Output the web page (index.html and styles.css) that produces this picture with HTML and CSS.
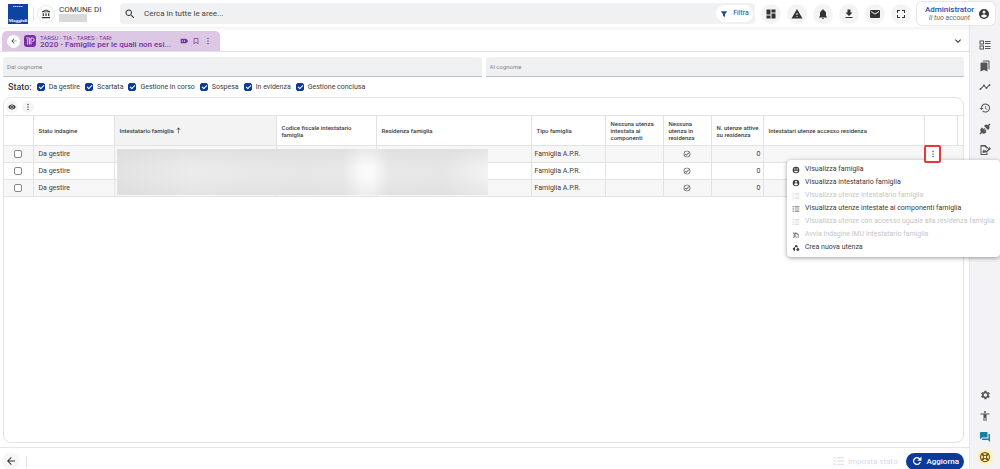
FILE: index.html
```html
<!DOCTYPE html>
<html lang="it">
<head>
<meta charset="utf-8">
<meta name="viewport" content="width=device-width, initial-scale=1">
<title>Famiglie</title>
<link rel="stylesheet" href="styles.css">
</head>
<body>
<svg class="sprite" aria-hidden="true">
  <symbol id="bank" viewBox="0 0 24 24"><path d="M4 10v7h3v-7H4zm6.500 0v7h3v-7h-3zM2 22h20v-3H2v3zm15-12v7h3v-7h-3zM12 1 2 6v2h20V6L12 1zm0 2.300L17.400 6H6.600z"/></symbol>
  <symbol id="search" viewBox="0 0 24 24"><path d="M15.500 14h-.8l-.3-.3A6.500 6.500 0 1 0 13.700 14.400l.3.3v.8l5 5 1.500-1.500-5-5zm-6 0a4.500 4.500 0 1 1 0-9 4.500 4.500 0 0 1 0 9z"/></symbol>
  <symbol id="filter" viewBox="0 0 24 24"><path d="M4 4h16a1 1 0 0 1 .8 1.600L15 13v8l-6-3v-5L3.200 5.600A1 1 0 0 1 4 4z"/></symbol>
  <symbol id="dash" viewBox="0 0 24 24"><path d="M3 13h8V3H3v10zm0 8h8v-6H3v6zm10 0h8V11h-8v10zm0-18v6h8V3h-8z"/></symbol>
  <symbol id="warn" viewBox="0 0 24 24"><path d="M1 21h22L12 2 1 21zm12-3h-2v-2h2v2zm0-4h-2v-4h2v4z"/></symbol>
  <symbol id="bell" viewBox="0 0 24 24"><path d="M12 22a2 2 0 0 0 2-2h-4a2 2 0 0 0 2 2zm6-6v-5c0-3.100-1.600-5.600-4.500-6.300V4a1.500 1.500 0 0 0-3 0v.7C7.600 5.400 6 7.900 6 11v5l-2 2v1h16v-1l-2-2z"/></symbol>
  <symbol id="download" viewBox="0 0 24 24"><path d="M19 9h-4V3H9v6H5l7 7 7-7zM5 18v2h14v-2H5z"/></symbol>
  <symbol id="mail" viewBox="0 0 24 24"><path d="M20 4H4a2 2 0 0 0-2 2v12a2 2 0 0 0 2 2h16a2 2 0 0 0 2-2V6a2 2 0 0 0-2-2zm0 4-8 5-8-5V6l8 5 8-5v2z"/></symbol>
  <symbol id="full" viewBox="0 0 24 24"><path d="M6 14H4v6h6v-2H6v-4zM4 10h2V6h4V4H4v6zm14 8h-4v2h6v-6h-2v4zM14 4v2h4v4h2V4h-6z"/></symbol>
  <symbol id="user" viewBox="0 0 24 24"><path d="M12 2a10 10 0 1 0 0 20 10 10 0 0 0 0-20zm0 3a3 3 0 1 1 0 6 3 3 0 0 1 0-6zm0 14.200a7.200 7.200 0 0 1-6-3.200c0-2 4-3.100 6-3.100s6 1.100 6 3.100a7.200 7.200 0 0 1-6 3.200z"/></symbol>
  <symbol id="family" viewBox="0 0 24 24"><path fill-rule="evenodd" d="M12 2a10 10 0 1 0 0 20 10 10 0 0 0 0-20zM8.500 7a2.300 2.300 0 1 1 0 4.600 2.300 2.300 0 0 1 0-4.600zm7 0a2.300 2.300 0 1 1 0 4.600 2.300 2.300 0 0 1 0-4.600zM6 15c2-1.500 4-1.500 6 0 2-1.500 4-1.500 6 0-1 2.500-3 4-6 4s-5-1.500-6-4z"/></symbol>
  <symbol id="back" viewBox="0 0 24 24"><path d="M20 11H7.800l5.600-5.600L12 4l-8 8 8 8 1.400-1.400L7.800 13H20v-2z"/></symbol>
  <symbol id="up" viewBox="0 0 24 24"><path d="m5 9 1.400 1.400L11 5.800V22h2V5.800l4.600 4.600L19 9l-7-7-7 7z"/></symbol>
  <symbol id="dots" viewBox="0 0 24 24"><circle cx="12" cy="4.500" r="2"/><circle cx="12" cy="12" r="2"/><circle cx="12" cy="19.500" r="2"/></symbol>
  <symbol id="tag" viewBox="0 0 24 24"><path fill-rule="evenodd" d="M2 5h15l6 4v6l-6 4H2V5zm4 5v4h3v-4H6zm6 0v4h3v-4h-3z"/></symbol>
  <symbol id="mark" viewBox="0 0 24 24"><path d="M17 3H7a2 2 0 0 0-2 2v16l7-3 7 3V5a2 2 0 0 0-2-2zm0 15-5-2.200L7 18V5h10v13z"/></symbol>
  <symbol id="down" viewBox="0 0 24 24"><path d="M7.400 8.600 12 13.200l4.600-4.600L18 10l-6 6-6-6z"/></symbol>
  <symbol id="eye" viewBox="0 0 24 24"><path fill-rule="evenodd" d="M12 4.500C7 4.500 2.700 7.600 1 12c1.700 4.400 6 7.500 11 7.500s9.300-3.100 11-7.500c-1.700-4.400-6-7.500-11-7.500zM12 17a5 5 0 1 1 0-10 5 5 0 0 1 0 10zm0-8a3 3 0 1 0 0 6 3 3 0 0 0 0-6z"/></symbol>
  <symbol id="ok" viewBox="0 0 24 24"><path d="M16.600 7.600 10 14.200l-2.600-2.600L6 13l4 4 8-8-1.400-1.400zM12 2a10 10 0 1 0 0 20 10 10 0 0 0 0-20zm0 18a8 8 0 1 1 0-16 8 8 0 0 1 0 16z"/></symbol>
  <symbol id="list" viewBox="0 0 24 24"><path d="M2 4h3v3H2zm0 6.500h3v3H2zM2 17h3v3H2zM8 4.500h14v2H8zM8 11h14v2H8zm0 6.500h14v2H8z"/></symbol>
  <symbol id="survey" viewBox="0 0 24 24"><path d="M4 4h3v3l5-3 8 5v12h-3v-9l-5-3-2 2 5 10h-3l-3-6-2 6H3l3-11-3-2z"/></symbol>
  <symbol id="cycle" viewBox="0 0 24 24"><path d="M12 5 8 11M16 11l3 6h-6M9 18H5l3-6" fill="none" stroke="currentColor" stroke-width="3"/><path d="M8 4h7l3 6-6-1zM21 12l1 6-5 4-3-5zM2 13l6-3 2 6-3 5z"/></symbol>
  <symbol id="checks" viewBox="0 0 24 24"><path fill-rule="evenodd" d="M1 3h9v8H1zm2 2v4h5V5zM1 13h9v8H1zm2 2v4h5v-4zM12 4h11v2H12zm0 4h11v2H12zm0 6h11v2H12zm0 4h11v2H12z"/></symbol>
  <symbol id="marks" viewBox="0 0 24 24"><path d="m19 18 2 1V3a2 2 0 0 0-2-2H9a2 2 0 0 0-2 2h10a2 2 0 0 1 2 2v13zM15 5H5a2 2 0 0 0-2 2v16l7-3 7 3V7a2 2 0 0 0-2-2z"/></symbol>
  <symbol id="trend" viewBox="0 0 24 24"><path d="M23 8a2 2 0 0 1-2.500 1.900L17 13.500a2 2 0 1 1-3.900 0L10.500 11a2 2 0 0 1-1 0L5 15.500A2 2 0 1 1 3.500 14L8 9.500a2 2 0 1 1 3.900 0l2.600 2.600h1L19 8.500A2 2 0 1 1 23 8z"/></symbol>
  <symbol id="history" viewBox="0 0 24 24"><path d="M13 3a9 9 0 0 0-9 9H1l4 4 4-4H6a7 7 0 1 1 2 5l-1.400 1.400A9 9 0 1 0 13 3zm-1 5v5l4.300 2.500.7-1.200-3.500-2V8z"/></symbol>
  <symbol id="plug" viewBox="0 0 24 24"><path d="m21 1 2 2-3 3c2 3 1 5-1 7l-1 1-8-8 1-1c2-2 4-3 7-1zM6 9l3 3 2-2 1.500 1.500-2 2 1 1 2-2L15 14l-2 2 2 2-2 2c-2 2-5 2-7 0l-3 3-2-2 3-3c-2-2-2-5 0-7z"/></symbol>
  <symbol id="sign" viewBox="0 0 24 24"><path d="M3 2h10l5 5v2h-3l-4-4H5v15h10v-3h2v5H3V2zm4 13c3-6 4-5 4-1l2-2 1 2 6-5 2 2-7 6h-3l-5 1z"/><path d="m18 9 3-3 3 3-3 3z"/></symbol>
  <symbol id="gear" viewBox="0 0 24 24"><path d="M19.400 13v-2l2.100-1.600-2-3.500-2.500 1-1.700-1L14.900 3.300h-4.100l-.4 2.600-1.700 1-2.500-1-2 3.500L6.300 11v2l-2.100 1.600 2 3.500 2.500-1 1.700 1 .4 2.600h4.100l.4-2.600 1.700-1 2.500 1 2-3.500zM12.900 15.500a3.500 3.500 0 1 1 0-7 3.500 3.500 0 0 1 0 7z"/></symbol>
  <symbol id="access" viewBox="0 0 24 24"><path d="M12 2a2 2 0 1 1 0 4 2 2 0 0 1 0-4zm9 7h-6v13h-2v-6h-2v6H9V9H3V7h18v2z"/></symbol>
  <symbol id="chat" viewBox="0 0 24 24"><path d="M21 6h-2v9H6v2a1 1 0 0 0 1 1h11l4 4V7a1 1 0 0 0-1-1zm-4 6V3a1 1 0 0 0-1-1H3a1 1 0 0 0-1 1v14l4-4h10a1 1 0 0 0 1-1z"/></symbol>
  <symbol id="buoy" viewBox="0 0 24 24"><circle cx="12" cy="12" r="9" fill="none" stroke="currentColor" stroke-width="2.500"/><circle cx="12" cy="12" r="3.500" fill="none" stroke="currentColor" stroke-width="2"/><path d="m5 5 5 5m4 4 5 5m0-14-5 5m-4 4-5 5" stroke="currentColor" stroke-width="4"/></symbol>
  <symbol id="reload" viewBox="0 0 24 24"><path d="M17.600 6.400A8 8 0 1 0 19.700 14h-2.800a5.300 5.300 0 1 1-1.200-5.700L12.500 11.500H21V3z"/></symbol>
</svg>

<div class="app">
  <div class="main">
    <header class="topbar">
      <svg class="logo" viewBox="0 0 20 20" role="img" aria-label="Maggioli"><rect width="20" height="20" fill="#0d43a3"/><path d="M5 2.500h10" stroke="#c5d3ec" stroke-dasharray="1.500 .4"/><text x="10" y="18" text-anchor="middle" class="logo-text">Maggioli</text></svg>
      <span class="rule"></span>
      <span class="round bordered"><svg class="icon"><use href="#bank"/></svg></span>
      <div class="entity"><span>COMUNE DI</span><span class="redacted"></span></div>
      <div class="search">
        <svg class="icon"><use href="#search"/></svg>
        <input type="text" aria-label="Cerca" placeholder="Cerca in tutte le aree...">
        <button class="filter"><svg class="icon small"><use href="#filter"/></svg>Filtra</button>
      </div>
      <nav class="tools">
        <button class="round" aria-label="Cruscotto"><svg class="icon"><use href="#dash"/></svg></button>
        <button class="round" aria-label="Avvisi"><svg class="icon"><use href="#warn"/></svg></button>
        <button class="round" aria-label="Notifiche"><svg class="icon"><use href="#bell"/></svg></button>
        <button class="round" aria-label="Scarica"><svg class="icon"><use href="#download"/></svg></button>
        <button class="round" aria-label="Posta"><svg class="icon"><use href="#mail"/></svg></button>
        <button class="round" aria-label="Schermo intero"><svg class="icon"><use href="#full"/></svg></button>
      </nav>
      <button class="account"><span class="who"><b>Administrator</b><i>Il tuo account</i></span><svg class="icon"><use href="#user"/></svg></button>
    </header>

    <div class="tabs">
      <div class="tab">
        <button class="tab-back" aria-label="Indietro"><svg class="icon small"><use href="#back"/></svg></button>
        <svg class="tab-logo" viewBox="0 0 12 12"><rect width="12" height="12" rx="3" fill="#7a2da4"/><path d="M2 3h3.500v6.500M3.700 4v5.500M7 9.500V3h1.500a1.700 1.700 0 0 1 0 3.500H8" fill="none" stroke="#e6d3ee"/></svg>
        <div class="tab-text"><span class="tab-area">TARSU - TIA - TARES - TARI</span><span class="tab-title">2020 - Famiglie per le quali non esi...</span></div>
        <button class="plain" aria-label="Etichetta"><svg class="icon small"><use href="#tag"/></svg></button>
        <button class="plain" aria-label="Segnalibro"><svg class="icon small"><use href="#mark"/></svg></button>
        <button class="plain" aria-label="Altro"><svg class="icon small"><use href="#dots"/></svg></button>
      </div>
      <button class="plain expand" aria-label="Espandi"><svg class="icon"><use href="#down"/></svg></button>
    </div>

    <main class="page">
      <div class="fields">
        <input type="text" aria-label="Dal cognome" placeholder="Dal cognome">
        <input type="text" aria-label="Al cognome" placeholder="Al cognome">
      </div>
      <div class="states">
        <span class="states-title">Stato:</span>
        <label><input type="checkbox" checked>Da gestire</label>
        <label><input type="checkbox" checked>Scartata</label>
        <label><input type="checkbox" checked>Gestione in corso</label>
        <label><input type="checkbox" checked>Sospesa</label>
        <label><input type="checkbox" checked>In evidenza</label>
        <label><input type="checkbox" checked>Gestione conclusa</label>
      </div>
      <section class="panel">
        <div class="panel-tools">
          <button class="round tiny" aria-label="Mostra"><svg class="icon small"><use href="#eye"/></svg></button>
          <button class="round tiny" aria-label="Altro"><svg class="icon small"><use href="#dots"/></svg></button>
        </div>
        <div class="grid">
          <table>
            <colgroup><col class="c-check"><col class="c-state"><col class="c-name"><col class="c-code"><col class="c-home"><col class="c-type"><col class="c-none"><col class="c-res"><col class="c-num"><col><col class="c-act"><col class="c-end"></colgroup>
            <thead><tr><th></th><th>Stato indagine</th><th class="sorted">Intestatario famiglia <svg class="sort"><use href="#up"/></svg></th><th>Codice fiscale intestatario famiglia</th><th>Residenza famiglia</th><th>Tipo famiglia</th><th>Nessuna utenza intestata ai componenti</th><th>Nessuna utenza in residenza</th><th>N. utenze attive su residenza</th><th>Intestatari utenze accesso residenza</th><th></th><th></th></tr></thead>
            <tbody>
              <tr><td class="mid"><input type="checkbox" aria-label="Riga 1"></td><td>Da gestire</td><td></td><td></td><td></td><td class="type">Famiglia A.P.R.</td><td></td><td class="mid"><svg class="icon small"><use href="#ok"/></svg></td><td class="num">0</td><td></td>
                <td class="act"><div class="anchor"><button class="more" aria-label="Azioni"><svg class="icon small"><use href="#dots"/></svg></button>
                  <div class="menu" role="menu">
                    <button role="menuitem"><svg class="icon small"><use href="#family"/></svg>Visualizza famiglia</button>
                    <button role="menuitem"><svg class="icon small"><use href="#user"/></svg>Visualizza intestatario famiglia</button>
                    <button role="menuitem" disabled><svg class="icon small"><use href="#list"/></svg>Visualizza utenze intestatario famiglia</button>
                    <button role="menuitem"><svg class="icon small"><use href="#list"/></svg>Visualizza utenze intestate ai componenti famiglia</button>
                    <button role="menuitem" disabled><svg class="icon small"><use href="#list"/></svg>Visualizza utenze con accesso uguale alla residenza famiglia</button>
                    <button role="menuitem" disabled><svg class="icon small dark"><use href="#survey"/></svg>Avvia indagine IMU intestatario famiglia</button>
                    <button role="menuitem"><svg class="icon small"><use href="#cycle"/></svg>Crea nuova utenza</button>
                  </div></div></td><td></td></tr>
              <tr><td class="mid"><input type="checkbox" aria-label="Riga 2"></td><td>Da gestire</td><td></td><td></td><td></td><td class="type">Famiglia A.P.R.</td><td></td><td class="mid"><svg class="icon small"><use href="#ok"/></svg></td><td class="num">0</td><td></td><td></td><td></td></tr>
              <tr><td class="mid"><input type="checkbox" aria-label="Riga 3"></td><td>Da gestire</td><td></td><td></td><td></td><td class="type">Famiglia A.P.R.</td><td></td><td class="mid"><svg class="icon small"><use href="#ok"/></svg></td><td class="num">0</td><td></td><td></td><td></td></tr>
            </tbody>
          </table>
          <div class="mask"></div>
        </div>
      </section>
    </main>

    <footer class="bottom">
      <button class="round" aria-label="Indietro"><svg class="icon"><use href="#back"/></svg></button>
      <span class="rule short"></span>
      <button class="set" disabled><svg class="icon"><use href="#list"/></svg>Imposta stato</button>
      <button class="refresh"><svg class="icon"><use href="#reload"/></svg>Aggiorna</button>
    </footer>
  </div>

  <aside class="side">
    <button aria-label="Attività"><svg class="icon"><use href="#checks"/></svg></button>
    <button aria-label="Segnalibri"><svg class="icon"><use href="#marks"/></svg></button>
    <button aria-label="Andamento"><svg class="icon"><use href="#trend"/></svg></button>
    <button aria-label="Cronologia"><svg class="icon"><use href="#history"/></svg></button>
    <button aria-label="Connessioni"><svg class="icon"><use href="#plug"/></svg></button>
    <button aria-label="Firma"><svg class="icon"><use href="#sign"/></svg></button>
    <span class="spacer"></span>
    <button aria-label="Impostazioni"><svg class="icon"><use href="#gear"/></svg></button>
    <button aria-label="Accessibilità"><svg class="icon"><use href="#access"/></svg></button>
    <button class="chat" aria-label="Chat"><svg class="icon"><use href="#chat"/></svg></button>
    <button class="help" aria-label="Aiuto"><svg class="icon"><use href="#buoy"/></svg></button>
  </aside>
</div>
</body>
</html>
```

FILE: styles.css
```css
* { box-sizing: border-box; }
body { margin: 0; font: 7px/9px Roboto, "Liberation Sans", sans-serif; color: #3a3a3a; background: #fff; }
button { font: inherit; color: inherit; border: 0; padding: 0; background: none; display: flex; align-items: center; justify-content: center; }
input { font: inherit; color: inherit; margin: 0; border: 0; }
.sprite { position: absolute; width: 0; height: 0; }
.icon { width: 12px; height: 12px; fill: currentColor; flex: none; }
.icon.small { width: 8px; height: 8px; }

.app { display: flex; min-height: 100vh; background: #f3f2f4; }
.main { flex: 1; min-width: 0; display: flex; flex-direction: column; background: #fff; border-right: 1px solid #e8e2ee; }

.topbar { display: flex; align-items: center; height: 27px; padding-left: 8px; margin-right: -26px; background: linear-gradient(to right, #fff calc(100% - 26px), transparent 0); }
.logo { width: 20px; height: 20px; }
.logo-text { font: bold 5px "Liberation Serif", serif; fill: #fff; }
.rule { width: 1px; height: 14px; margin: 0 4px 0 5px; background: #e2e2e2; }
.round { width: 20px; height: 20px; border-radius: 50%; background: #f4f4f4; color: #333; flex: none; }
.round.bordered { width: 16px; height: 16px; background: #fff; box-shadow: 0 0 0 1px #e8e8e8; display: flex; align-items: center; justify-content: center; }
.round.bordered .icon { width: 10px; height: 10px; }
.entity { display: flex; flex-direction: column; width: 61px; padding-left: 5px; font-size: 8px; line-height: 8px; white-space: nowrap; }
.redacted { width: 28px; height: 8px; background: #d9d9d9; }
.search { flex: 1; display: flex; align-items: center; height: 21px; margin: 0 6px 0 5px; padding: 0 2px 0 4px; border-radius: 4px; background: #f0f1f2; }
.search input { flex: 1; min-width: 0; padding: 0 8px; background: none; font-size: 8px; }
.search input::placeholder { color: #444; opacity: 1; }
.filter { gap: 5px; width: 37px; height: 17px; border-radius: 9px; background: #fff; color: #27489f; font-size: 7px; }
.tools { display: flex; gap: 6px; }
.account { gap: 4px; height: 23px; margin-left: 6px; padding: 0 5px 0 8px; border-radius: 5px; background: #fff; box-shadow: 0 0 0 1px #e7e7ea; }
.who { display: flex; flex-direction: column; text-align: right; line-height: 8px; }
.who b { color: #2850a8; font-size: 8px; font-weight: 500; }
.who i { color: #666; padding-right: 4px; }

.tabs { display: flex; align-items: flex-end; justify-content: space-between; height: 25px; padding: 0 5px 0 2px; border-bottom: 1px solid #e8dcee; box-shadow: inset 0 2px 3px #f3f3f3; }
.tab { display: flex; align-items: center; width: 218px; height: 20px; padding: 0 6px 0 5px; border-radius: 5px 5px 0 0; background: #dcc8e5; color: #75309a; }
.tab-back { width: 13px; height: 13px; border-radius: 50%; background: #fff; color: #444; }
.tab-logo { width: 12px; height: 12px; margin: 0 4px; }
.tab-text { flex: 1; display: flex; flex-direction: column; white-space: nowrap; }
.tab-area { font-size: 6px; line-height: 7px; }
.tab-title { font-size: 8px; line-height: 8px; font-weight: 500; }
.plain { width: 12px; height: 20px; }
.expand { color: #333; }

.page { flex: 1; display: flex; flex-direction: column; padding: 5px 5px 4px 3px; }
.fields { display: grid; grid-template-columns: 1fr 1fr; gap: 4px; }
.fields input { min-width: 0; height: 20px; padding: 0 4px; border-radius: 3px 3px 0 0; border-bottom: 1px solid #bfc1c3; background: #eff0f1; font-size: 6px; }
.fields input::placeholder { color: #858585; opacity: 1; }
.states { display: flex; align-items: center; gap: 5px; height: 20px; padding-left: 5px; }
.states-title { font-size: 9px; font-weight: 500; }
.states label { display: flex; align-items: center; gap: 4px; }
input[type="checkbox"] { appearance: none; display: block; position: relative; width: 8px; height: 8px; border: 1px solid #888; border-radius: 2px; background: #fff; }
input[type="checkbox"]:checked { border-color: #0b3a9b; background: #0b3a9b; }
input[type="checkbox"]:checked::after { content: ""; position: absolute; left: 2px; top: 0; width: 2px; height: 4px; border: solid #fff; border-width: 0 1px 1px 0; transform: rotate(45deg); }

.panel { flex: 1; border: 1px solid #e3e3e3; border-radius: 8px; }
.panel-tools { display: flex; align-items: center; gap: 4px; height: 17px; padding-left: 2px; }
.round.tiny { width: 12px; height: 12px; }
.grid { position: relative; }
table { width: 100%; table-layout: fixed; border-collapse: collapse; border-top: 1px solid #e3e3e3; }
.c-check { width: 29px; } .c-state { width: 81px; } .c-name { width: 162px; } .c-code { width: 100px; }
.c-home { width: 155px; } .c-type { width: 74px; } .c-none { width: 58px; } .c-res { width: 48px; }
.c-num { width: 52px; } .c-act { width: 33px; } .c-end { width: 6px; }
th, td { padding: 0 5px; border-right: 1px solid #e3e3e3; border-bottom: 1px solid #e3e3e3; text-align: left; }
th:last-child, td:last-child { border-right: 0; padding: 0; }
th { height: 30px; padding-right: 2px; font-size: 6px; line-height: 7px; font-weight: 500; }
th.sorted { background: #f3f3f3; }
.sort { width: 7px; height: 7px; fill: currentColor; vertical-align: middle; }
td { height: 17px; }
tbody tr:nth-child(odd) { background: #f7f7f7; }
td.mid { text-align: center; vertical-align: middle; }
td.mid input { margin: 0 auto; }
td.mid .icon { display: block; margin: 0 auto; }
td.type { padding-left: 3px; }
td.num { text-align: right; padding-right: 2px; }
td.act { padding: 0; }
tbody td:nth-child(n+10) { border-right: 0; }
.anchor { position: relative; width: 16px; }
.more { position: relative; z-index: 3; width: 17px; height: 18px; margin: -1px 0; border: 2px solid #e53935; border-radius: 2px; background: #fff; }
.menu { position: absolute; z-index: 2; top: 15px; left: -137px; width: 213px; padding: 3px 0; border-radius: 4px; background: #fff; box-shadow: 0 1px 4px #0006; }
.menu button { width: 100%; height: 13px; justify-content: flex-start; gap: 5px; padding-left: 5px; white-space: nowrap; }
.menu button:disabled { color: #c6c6c6; }
.menu .dark { color: #888; }
.mask { position: absolute; top: 34px; left: 113px; width: 371px; height: 46px; background: linear-gradient(to bottom, #d8d8d888, transparent 40%, transparent 60%, #d8d8d866), linear-gradient(to right, #e2e2e2, #ebebeb 20%, #e6e6e6 50%, #e8e8e8 61%, #fafafa 66%, #fafafa 69%, #e8e8e8 73%, #e6e6e6 88%, #f2f2f2); }

.bottom { display: flex; align-items: center; height: 22px; padding: 5px 5px 0 2px; border-top: 1px solid #e6e6e6; }
.bottom .round { width: 18px; height: 18px; background: #f7f7f7; }
.rule.short { height: 11px; margin: 0 auto 0 6px; }
.set { gap: 3px; margin-right: 9px; color: #d4dcec; font-size: 8px; }
.refresh { gap: 3px; height: 17px; padding: 0 5px; border-radius: 9px; background: #0b3a9b; color: #fff; font-size: 8px; font-weight: 500; }

.side { display: flex; flex-direction: column; align-items: center; width: 30px; padding: 34px 0 2px; color: #555; }
.side button { width: 21px; height: 21px; }
.spacer { flex: 1; }
.side .chat { color: #1681a0; }
.side .help { width: 16px; height: 16px; margin: 2px; border-radius: 50%; background: #fff1bd; color: #735c10; }
```
